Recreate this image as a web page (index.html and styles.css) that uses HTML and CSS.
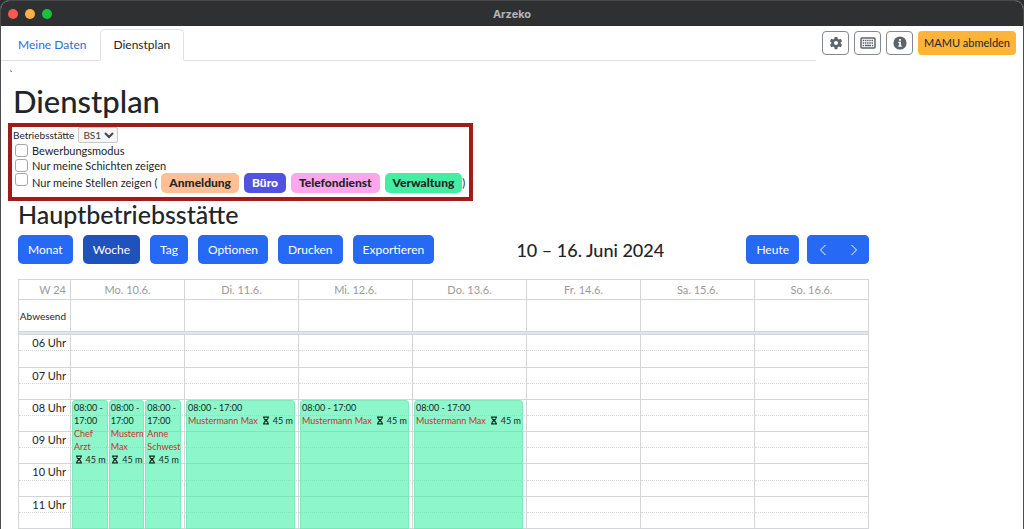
FILE: index.html
```html
<!DOCTYPE html>
<html lang="de">
<head>
<meta charset="utf-8">
<title>Arzeko</title>
<link rel="stylesheet" href="styles.css">
</head>
<body>
<svg class="sprite" aria-hidden="true">
  <symbol id="hourglass" viewBox="0 0 16 16"><path d="M2 0h12v2.500h-1c0 2.500-1.500 4.500-3.500 5.500 2 1 3.500 3 3.500 5.500h1V16H2v-2.500h1c0-2.500 1.500-4.500 3.500-5.500C4.500 7 3 5 3 2.500H2zM5 2.500c0 1 .3 1.800.8 2.500h4.400c.5-.7.8-1.500.8-2.500zM5 13.500h6c-.3-1.700-1.500-2.700-3-3.500-1.500.8-2.700 1.800-3 3.500z" fill="currentColor" fill-rule="evenodd"/></symbol>
</svg>
<div class="window">
  <header class="titlebar">
    <div class="lights"><span class="light red"></span><span class="light amber"></span><span class="light green"></span></div>
    <div class="app-name">Arzeko</div>
  </header>
  <div class="topbar">
    <nav class="tabs">
      <a class="tab" href="#">Meine Daten</a>
      <a class="tab active" href="#" aria-current="page">Dienstplan</a>
    </nav>
    <div class="tools">
      <button class="tool" aria-label="Einstellungen"><svg viewBox="0 0 16 16"><path fill="currentColor" fill-rule="evenodd" d="M6.500 1h3l.5 2.200 1.200.7 2.200-.7 1.500 2.600L13.300 7.300v1.400l1.600 1.500-1.500 2.600-2.200-.7-1.200.7-.5 2.200h-3L6 12.800l-1.200-.7-2.200.7-1.500-2.600 1.600-1.500V7.300L1.100 5.800l1.500-2.600 2.200.7L6 3.200zM8 5.600a2.400 2.400 0 1 0 0 4.800 2.400 2.400 0 0 0 0-4.800z"/></svg></button>
      <button class="tool" aria-label="Tastatur"><svg class="wide" viewBox="0 0 16 12"><rect x="1" y="1" width="14" height="10" rx="1" fill="none" stroke="currentColor" stroke-width="1.500"/><path stroke="currentColor" stroke-width="1.500" stroke-dasharray="1.500 .7" d="M2.700 3.600h11M2.700 6h11"/><path stroke="currentColor" stroke-width="1.500" d="M2.700 8.500h1.500M5 8.500h6M11.800 8.500h1.500"/></svg></button>
      <button class="tool" aria-label="Information"><svg viewBox="0 0 16 16"><circle cx="8" cy="8" r="7.500" fill="currentColor"/><path fill="#fff" d="M6.900 3.300h2.200v2H6.900zM6 6.500h3.100v4.300h1V12.300H6v-1.500h1V8H6z"/></svg></button>
      <button class="logout">MAMU abmelden</button>
    </div>
  </div>
  <main class="page">
    <div class="tick">`</div>
    <h1 class="title">Dienstplan</h1>
    <form class="filters">
      <div class="filter-row place"><label for="bs">Betriebsstätte</label><select id="bs" class="select"><option>BS1</option></select></div>
      <div class="filter-row"><input class="check" type="checkbox" id="c1"><label for="c1">Bewerbungsmodus</label></div>
      <div class="filter-row"><input class="check" type="checkbox" id="c2"><label for="c2">Nur meine Schichten zeigen</label></div>
      <div class="filter-row jobs"><input class="check" type="checkbox" id="c3"><label for="c3">Nur meine Stellen zeigen (</label>
        <div class="job-list"><div class="badges"><span class="badge peach">Anmeldung</span><span class="badge indigo">Büro</span><span class="badge pink">Telefondienst</span><span class="badge mint">Verwaltung</span></div><span>)</span></div></div>
    </form>
    <section class="calendar">
      <h2 class="place-name">Hauptbetriebsstätte</h2>
      <div class="toolbar">
        <div class="group">
          <button class="btn">Monat</button><button class="btn pressed">Woche</button><button class="btn">Tag</button><button class="btn">Optionen</button><button class="btn">Drucken</button><button class="btn">Exportieren</button>
        </div>
        <h3 class="range">10 – 16. Juni 2024</h3>
        <div class="group end">
          <button class="btn">Heute</button>
          <div class="pager"><button class="btn arrow" aria-label="Zurück"><svg viewBox="0 0 8 12"><path d="M6.500 1 1.500 6l5 5"/></svg></button><button class="btn arrow" aria-label="Weiter"><svg viewBox="0 0 8 12"><path d="m1.500 1 5 5-5 5"/></svg></button></div>
        </div>
      </div>
      <table class="week">
        <thead>
          <tr class="days"><th class="axis">W 24</th><th>Mo. 10.6.</th><th>Di. 11.6.</th><th>Mi. 12.6.</th><th>Do. 13.6.</th><th>Fr. 14.6.</th><th>Sa. 15.6.</th><th>So. 16.6.</th></tr>
        </thead>
        <tbody>
          <tr class="absent"><th class="axis">Abwesend</th><td></td><td></td><td></td><td></td><td></td><td></td><td></td></tr>
          <tr class="divider"><td colspan="8"></td></tr>
          <tr class="slot"><th class="axis">06 Uhr</th><td></td><td></td><td></td><td></td><td></td><td></td><td></td></tr>
          <tr class="slot half"><td class="axis"></td><td></td><td></td><td></td><td></td><td></td><td></td><td></td></tr>
          <tr class="slot"><th class="axis">07 Uhr</th><td></td><td></td><td></td><td></td><td></td><td></td><td></td></tr>
          <tr class="slot half"><td class="axis"></td><td></td><td></td><td></td><td></td><td></td><td></td><td></td></tr>
          <tr class="slot"><th class="axis">08 Uhr</th>
            <td><div class="events">
              <div class="event">08:00 - 17:00<br><span class="who">Chef<br>Arzt</span><span class="break"><svg><use href="#hourglass"/></svg>45 m</span></div>
              <div class="event">08:00 - 17:00<br><span class="who">Mustermann Max</span><span class="break"><svg><use href="#hourglass"/></svg>45 m</span></div>
              <div class="event">08:00 - 17:00<br><span class="who">Anne Schwester</span><span class="break"><svg><use href="#hourglass"/></svg>45 m</span></div>
            </div></td>
            <td><div class="events"><div class="event single">08:00 - 17:00<br><span class="who">Mustermann Max</span><span class="break"><svg><use href="#hourglass"/></svg>45 m</span></div></div></td>
            <td><div class="events"><div class="event single">08:00 - 17:00<br><span class="who">Mustermann Max</span><span class="break"><svg><use href="#hourglass"/></svg>45 m</span></div></div></td>
            <td><div class="events"><div class="event single">08:00 - 17:00<br><span class="who">Mustermann Max</span><span class="break"><svg><use href="#hourglass"/></svg>45 m</span></div></div></td>
            <td></td><td></td><td></td></tr>
          <tr class="slot half"><td class="axis"></td><td></td><td></td><td></td><td></td><td></td><td></td><td></td></tr>
          <tr class="slot"><th class="axis">09 Uhr</th><td></td><td></td><td></td><td></td><td></td><td></td><td></td></tr>
          <tr class="slot half"><td class="axis"></td><td></td><td></td><td></td><td></td><td></td><td></td><td></td></tr>
          <tr class="slot"><th class="axis">10 Uhr</th><td></td><td></td><td></td><td></td><td></td><td></td><td></td></tr>
          <tr class="slot half"><td class="axis"></td><td></td><td></td><td></td><td></td><td></td><td></td><td></td></tr>
          <tr class="slot"><th class="axis">11 Uhr</th><td></td><td></td><td></td><td></td><td></td><td></td><td></td></tr>
          <tr class="slot half"><td class="axis"></td><td></td><td></td><td></td><td></td><td></td><td></td><td></td></tr>
        </tbody>
      </table>
    </section>
  </main>
</div>
</body>
</html>
```
FILE: styles.css
```css
* { box-sizing: border-box; }
body { margin: 0; background: #2d2e30; color: #212529; font: 11px/16px Lato, "Noto Sans", sans-serif; }
button, select, input { font: inherit; margin: 0; }
.sprite { display: none; }
.window { height: 100vh; overflow: hidden; display: flex; flex-direction: column; background: #fff; border: solid #4a4b4d; border-width: 1px 1px 0; border-radius: 9px 9px 0 0; }
.titlebar { flex: none; height: 25px; background: #2f3032; display: grid; grid-template-columns: 1fr auto 1fr; align-items: center; }
.lights { display: flex; gap: 7px; padding-left: 7px; }
.light { width: 10px; height: 10px; border-radius: 50%; }
.red { background: #fc5753; }
.amber { background: #fdb340; }
.green { background: #1ac13f; }
.app-name { color: #b4b5b6; font: bold 11px/16px Inter, sans-serif; }
.topbar { flex: none; display: flex; height: 35px; padding-right: 7px; gap: 6px; }
.tabs { flex: 1; display: flex; align-items: flex-end; height: 35px; border-bottom: 1px solid #dee2e6; font-size: 12px; }
.tab { display: flex; align-items: center; height: 32px; padding: 0 13px 0 12px; border: 1px solid transparent; color: #2f6bd8; text-decoration: none; margin-bottom: -1px; }
.tab:first-child { padding: 0 13px 0 16px; }
.tab.active { color: #212529; background: #fff; border-color: #dee2e6; border-bottom-color: #fff; border-radius: 5px 5px 0 0; }
.tools { display: flex; gap: 5px; padding-top: 5px; }
.tool { width: 27px; height: 24px; padding: 0; display: grid; place-items: center; color: #5c636a; background: #fff; border: 1px solid #82898f; border-radius: 4px; }
.tool svg { width: 14px; height: 14px; }
.tool .wide { width: 16px; height: 12px; }
.logout { height: 24px; padding: 0 6px; border: 0; border-radius: 4px; background: #fdb438; color: #212529; }
.page { flex: 1; min-height: 0; padding-left: 7px; }
.tick { height: 22px; padding: 6px 0 0 1px; }
.title { margin: 0 0 4px 5px; font-size: 31px; line-height: 36px; font-weight: 500; }
.filters { width: 465px; height: 78px; border: 4px solid #a01b1e; padding: 0 1px; }
.filter-row { display: flex; align-items: center; height: 15px; gap: 4px; padding-left: 2px; }
.filter-row.place { height: 16px; padding-left: 0; font-size: 10px; }
.filter-row.jobs { height: 20px; }
.jobs .check { align-self: flex-start; }
.check { appearance: none; width: 13px; height: 13px; border: 1px solid #a8a8a8; border-radius: 3px; background: #fff; }
.select { height: 16px; padding: 0; border: 1px solid #c8c8c8; border-radius: 2px; background: #f5f5f5; color: #444; }
.job-list { display: flex; align-items: center; }
.badges { display: flex; gap: 5px; }
.badge { padding: 0 8px; line-height: 20px; border-radius: 5px; font-size: 12px; font-weight: 900; color: #212529; }
.peach { background: #ffbf94; }
.indigo { background: #5252e0; color: #fff; }
.pink { background: #fca6ec; }
.mint { background: #43eda2; }
.calendar { max-width: 861px; padding-left: 10px; }
.place-name { margin: 0 0 7px; font-size: 25px; line-height: 27px; font-weight: 500; }
.toolbar { display: flex; justify-content: space-between; align-items: center; margin-bottom: 15px; }
.group { display: flex; gap: 10px; }
.end { gap: 8px; }
.btn { height: 29px; padding: 0 10px; border: 0; border-radius: 5px; background: #2669f5; color: #fff; font-size: 12px; }
.pressed { background: #1f52bb; }
.pager { display: flex; background: #2669f5; border-radius: 5px; }
.arrow { width: 31px; padding: 0; display: grid; place-items: center; }
.arrow svg { width: 8px; height: 12px; fill: none; stroke: #fff; stroke-width: 1; }
.range { margin: 0; font-size: 18px; line-height: 24px; font-weight: 500; }
.week { width: 100%; height: 250px; table-layout: fixed; border-spacing: 0; border-left: 1px solid #d3d6d8; border-top: 1px solid #d3d6d8; }
.week td, .week th { padding: 0; border-right: 1px solid #d3d6d8; font-weight: 400; }
.week .axis { width: 52px; padding-right: 4px; text-align: right; white-space: nowrap; }
.days th { height: 20px; border-bottom: 1px solid #d3d6d8; color: #9a9a9a; }
.absent td, .absent th { height: 31px; font-size: 10px; }
.week .divider td { height: 4px; background: #e3e5e8; border-top: 1px solid #d3d6d8; border-bottom: 1px solid #d3d6d8; }
.slot td, .slot th { height: 16px; border-bottom: 1px dotted #d3d6d8; line-height: 15px; vertical-align: middle; position: relative; }
.half td { border-bottom-style: solid; }
.events { position: absolute; top: 0; left: 1px; right: 3px; height: 292px; display: flex; gap: 1px; z-index: 1; }
.event { flex: 1; min-width: 0; overflow: hidden; padding: 0 0 0 1px; border: 1px solid #7fe9bd; border-radius: 3px; background: rgba(67, 240, 168, .6); font-size: 9px; line-height: 13px; color: #14281f; white-space: normal; }
.who { color: #c62f2f; }
.break { display: flex; align-items: center; justify-content: flex-end; gap: 3px; padding-right: 1px; white-space: nowrap; }
.break svg { flex: none; width: 8px; height: 9px; }
.single .break { float: right; }
```
